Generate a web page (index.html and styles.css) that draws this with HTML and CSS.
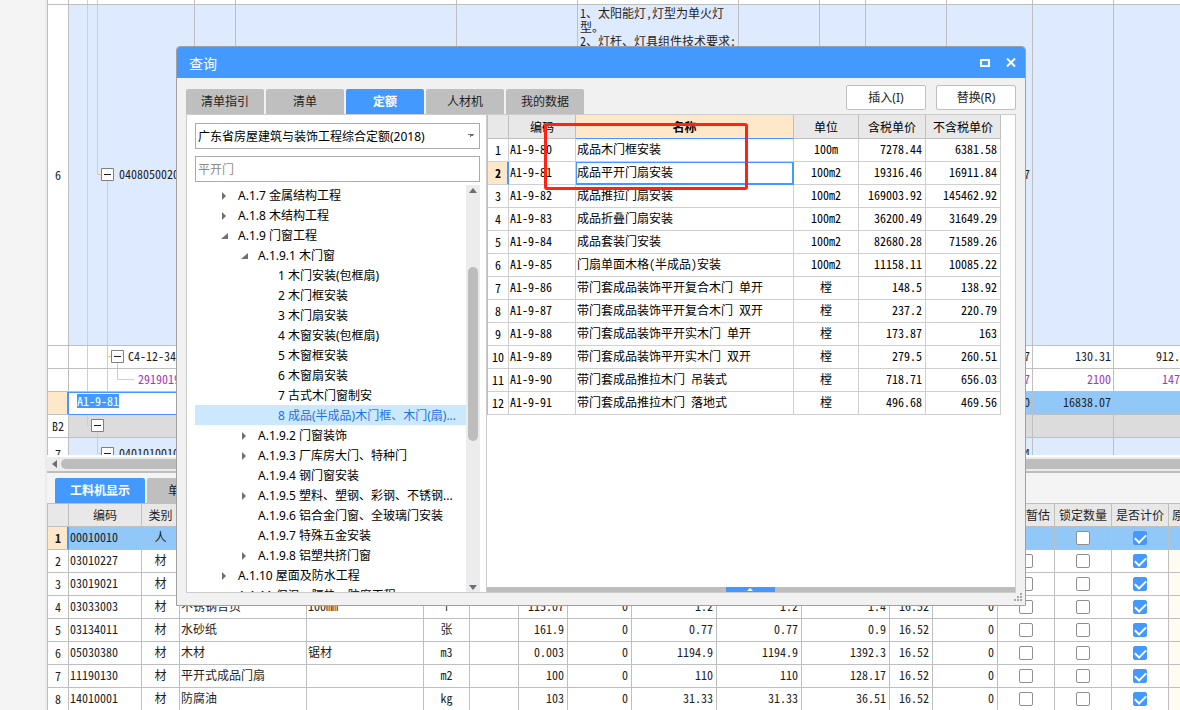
FILE: index.html
```html
<!DOCTYPE html>
<html lang="zh-CN">
<head>
<meta charset="utf-8">
<title>查询</title>
<link rel="stylesheet" href="styles.css">
</head>
<body>
<div class="app">
  <aside class="rail"></aside>
  <main class="work">
    <section class="bill">
      <table class="grid bill-grid">
        <colgroup><col class="w21"><col class="w126"><col class="w41"><col class="w221"><col class="w121"><col class="w161"><col class="w81"><col class="w46"><col class="w81"><col class="w86"><col class="w81"><col class="w81"></colgroup>
        <tbody>
          <tr class="peek"><td></td><td class="tree-cell"><svg width="30" height="4"><path class="branch" d="M18.5 0V4M28.5 0V4"/></svg></td><td></td><td></td><td></td><td></td><td></td><td></td><td></td><td></td><td></td><td></td></tr>
          <tr class="item"><td class="no">6</td><td class="tree-cell"><div class="node"><svg width="46" height="340"><path class="branch" d="M18.5 0V340M28.5 0V169.5H33M38.5 176V340"/><path class="box" d="M32.5 163.5h12v12h-12z"/><path class="minus" d="M35 169.5h7"/></svg><span class="gap">040805002001</span></div></td><td></td><td></td><td></td><td class="note">1、太阳能灯,灯型为单火灯型。<br>2、灯杆、灯具组件技术要求:</td><td></td><td></td><td></td><td class="num">7</td><td></td><td></td></tr>
          <tr><td class="no"></td><td class="tree-cell"><div class="node"><svg width="55" height="22"><path class="branch" d="M18.5 0V22M38.5 0V22M38.5 10.5H43M48.5 17V22"/><path class="box" d="M42.5 4.5h12v12h-12z"/><path class="minus" d="M45 10.5h7"/></svg><span class="gap">C4-12-34</span></div></td><td></td><td></td><td></td><td></td><td></td><td></td><td></td><td class="num">7</td><td class="num">130.31</td><td class="num">912.17</td></tr>
          <tr class="purple"><td class="no"></td><td class="tree-cell"><div class="node"><svg width="65" height="22"><path class="branch" d="M18.5 0V22M38.5 0V22M48.5 0V10.5H65"/></svg><span class="gap">29190190</span></div></td><td></td><td></td><td></td><td></td><td></td><td></td><td></td><td class="num">7</td><td class="num">2100</td><td class="num">14700</td></tr>
          <tr class="picked"><td class="no here"></td><td class="editing"><mark>A1-9-81</mark></td><td></td><td></td><td></td><td></td><td></td><td></td><td></td><td class="num">0</td><td class="num">16838.07</td><td></td></tr>
          <tr class="part"><td class="no">B2</td><td class="tree-cell"><div class="node"><svg width="46" height="22"><path class="branch" d="M18.5 0V10.5H23M28.5 17V22"/><path class="box" d="M22.5 4.5h12v12h-12z"/><path class="minus" d="M25 10.5h7"/></svg></div></td><td></td><td></td><td></td><td></td><td></td><td></td><td></td><td></td><td></td><td></td></tr>
          <tr class="item last"><td class="no">7</td><td class="tree-cell"><div class="node"><svg width="46" height="32"><path class="branch" d="M28.5 0V15.5H33M38.5 22V32"/><path class="box" d="M32.5 9.5h12v12h-12z"/><path class="minus" d="M35 15.5h7"/></svg><span class="gap">040101001001</span></div></td><td></td><td></td><td></td><td></td><td></td><td></td><td></td><td class="num">4</td><td></td><td></td></tr>
        </tbody>
      </table>
    </section>
    <div class="hscroll"><svg width="14" height="14"><path d="M10 3v8L5 7z" fill="#6d6d76"/></svg><span class="hthumb"></span></div>
    <section class="detail">
      <nav class="subtabs"><button class="subtab on">工料机显示</button><button class="subtab">单价构成</button></nav>
      <table class="grid detail-grid">
        <colgroup><col class="w21"><col class="w73"><col class="w38"><col class="w127"><col class="w117"><col class="w46"><col class="w49"><col class="w49"><col class="w64"><col class="w85"><col class="w85"><col class="w88"><col class="w43"><col class="w65"><col class="w57"><col class="w57"><col class="w57"><col class="w81"></colgroup>
        <thead><tr><th></th><th>编码</th><th>类别</th><th></th><th></th><th></th><th></th><th></th><th></th><th></th><th></th><th></th><th></th><th></th><th>是否暂估</th><th>锁定数量</th><th>是否计价</th><th class="left">原</th></tr></thead>
        <tbody>
          <tr class="picked"><td class="no here">1</td><td>00010010</td><td class="mid">人</td><td></td><td></td><td></td><td></td><td></td><td></td><td></td><td></td><td></td><td></td><td></td><td></td><td class="mid"><input type="checkbox" aria-label="锁定数量"></td><td class="mid"><input type="checkbox" aria-label="是否计价" checked></td><td></td></tr>
          <tr><td class="no">2</td><td>03010227</td><td class="mid">材</td><td></td><td></td><td></td><td></td><td></td><td></td><td></td><td></td><td></td><td></td><td></td><td class="mid"><input type="checkbox" aria-label="是否暂估"></td><td class="mid"><input type="checkbox" aria-label="锁定数量"></td><td class="mid"><input type="checkbox" aria-label="是否计价" checked></td><td class="cream"></td></tr>
          <tr><td class="no">3</td><td>03019021</td><td class="mid">材</td><td></td><td></td><td></td><td></td><td></td><td></td><td></td><td></td><td></td><td></td><td></td><td class="mid"><input type="checkbox" aria-label="是否暂估"></td><td class="mid"><input type="checkbox" aria-label="锁定数量"></td><td class="mid"><input type="checkbox" aria-label="是否计价" checked></td><td class="cream"></td></tr>
          <tr><td class="no">4</td><td>03033003</td><td class="mid">材</td><td>不锈钢合页</td><td>100mm</td><td class="mid">个</td><td></td><td class="num">115.07</td><td class="num">0</td><td class="num">1.2</td><td class="num">1.2</td><td class="num">1.4</td><td class="num">16.52</td><td class="num">0</td><td class="mid"><input type="checkbox" aria-label="是否暂估"></td><td class="mid"><input type="checkbox" aria-label="锁定数量"></td><td class="mid"><input type="checkbox" aria-label="是否计价" checked></td><td class="cream"></td></tr>
          <tr><td class="no">5</td><td>03134011</td><td class="mid">材</td><td>水砂纸</td><td></td><td class="mid">张</td><td></td><td class="num">161.9</td><td class="num">0</td><td class="num">0.77</td><td class="num">0.77</td><td class="num">0.9</td><td class="num">16.52</td><td class="num">0</td><td class="mid"><input type="checkbox" aria-label="是否暂估"></td><td class="mid"><input type="checkbox" aria-label="锁定数量"></td><td class="mid"><input type="checkbox" aria-label="是否计价" checked></td><td class="cream"></td></tr>
          <tr><td class="no">6</td><td>05030380</td><td class="mid">材</td><td>木材</td><td>锯材</td><td class="mid">m3</td><td></td><td class="num">0.003</td><td class="num">0</td><td class="num">1194.9</td><td class="num">1194.9</td><td class="num">1392.3</td><td class="num">16.52</td><td class="num">0</td><td class="mid"><input type="checkbox" aria-label="是否暂估"></td><td class="mid"><input type="checkbox" aria-label="锁定数量"></td><td class="mid"><input type="checkbox" aria-label="是否计价" checked></td><td class="cream"></td></tr>
          <tr><td class="no">7</td><td>11190130</td><td class="mid">材</td><td>平开式成品门扇</td><td></td><td class="mid">m2</td><td></td><td class="num">100</td><td class="num">0</td><td class="num">110</td><td class="num">110</td><td class="num">128.17</td><td class="num">16.52</td><td class="num">0</td><td class="mid"><input type="checkbox" aria-label="是否暂估"></td><td class="mid"><input type="checkbox" aria-label="锁定数量"></td><td class="mid"><input type="checkbox" aria-label="是否计价" checked></td><td class="cream"></td></tr>
          <tr><td class="no">8</td><td>14010001</td><td class="mid">材</td><td>防腐油</td><td></td><td class="mid">kg</td><td></td><td class="num">103</td><td class="num">0</td><td class="num">31.33</td><td class="num">31.33</td><td class="num">36.51</td><td class="num">16.52</td><td class="num">0</td><td class="mid"><input type="checkbox" aria-label="是否暂估"></td><td class="mid"><input type="checkbox" aria-label="锁定数量"></td><td class="mid"><input type="checkbox" aria-label="是否计价" checked></td><td class="cream"></td></tr>
        </tbody>
      </table>
    </section>
  </main>

  <div class="dialog" role="dialog" aria-label="查询">
    <header class="titlebar">
      <h1>查询</h1>
      <button class="winbtn" aria-label="最大化"><svg width="10" height="8"><path d="M1 1h8v6H1z" fill="none" stroke="#fff" stroke-width="2"/></svg></button>
      <button class="winbtn" aria-label="关闭"><svg width="10" height="9"><path d="M1 .5l8 8M9 .5l-8 8" stroke="#fff" stroke-width="2"/></svg></button>
    </header>
    <div class="toolbar">
      <nav class="tabs"><button class="tab">清单指引</button><button class="tab">清单</button><button class="tab on">定额</button><button class="tab">人材机</button><button class="tab">我的数据</button></nav>
      <div class="actions"><button class="action">插入(I)</button><button class="action">替换(R)</button></div>
    </div>
    <div class="panel">
      <section class="finder">
        <select class="field" aria-label="定额库"><option>广东省房屋建筑与装饰工程综合定额(2018)</option></select>
        <input class="field query" type="text" placeholder="平开门" aria-label="搜索">
        <div class="treebox">
          <ul class="tree">
            <li class="d1 closed">A.1.7 金属结构工程</li>
            <li class="d1 closed">A.1.8 木结构工程</li>
            <li class="d1 open">A.1.9 门窗工程</li>
            <li class="d2 open">A.1.9.1 木门窗</li>
            <li class="d3">1 木门安装(包框扇)</li>
            <li class="d3">2 木门框安装</li>
            <li class="d3">3 木门扇安装</li>
            <li class="d3">4 木窗安装(包框扇)</li>
            <li class="d3">5 木窗框安装</li>
            <li class="d3">6 木窗扇安装</li>
            <li class="d3">7 古式木门窗制安</li>
            <li class="d3 current">8 成品(半成品)木门框、木门(扇)...</li>
            <li class="d2 closed">A.1.9.2 门窗装饰</li>
            <li class="d2 closed">A.1.9.3 厂库房大门、特种门</li>
            <li class="d2">A.1.9.4 钢门窗安装</li>
            <li class="d2 closed">A.1.9.5 塑料、塑钢、彩钢、不锈钢...</li>
            <li class="d2">A.1.9.6 铝合金门窗、全玻璃门安装</li>
            <li class="d2">A.1.9.7 特殊五金安装</li>
            <li class="d2 closed">A.1.9.8 铝塑共挤门窗</li>
            <li class="d1 closed">A.1.10 屋面及防水工程</li>
            <li class="d1">A.1.11 保温、隔热、防腐工程</li>
          </ul>
          <div class="vscroll">
            <svg width="14" height="10"><path d="M3 8h8L7 3z" fill="#6d6d76"/></svg>
            <span class="track"><span class="vthumb"></span></span>
            <svg width="14" height="10"><path d="M3 3h8L7 8z" fill="#6d6d76"/></svg>
          </div>
        </div>
      </section>
      <section class="results">
        <div class="table-area">
        <table class="grid quota">
          <colgroup><col class="w21"><col class="w67"><col class="w218"><col class="w65"><col class="w67"><col class="w75"></colgroup>
          <thead><tr><th></th><th>编码</th><th class="active">名称</th><th>单位</th><th>含税单价</th><th>不含税单价</th></tr></thead>
          <tbody>
            <tr><td class="no">1</td><td>A1-9-80</td><td>成品木门框安装</td><td class="mid">100m</td><td class="num">7278.44</td><td class="num">6381.58</td></tr>
            <tr><td class="no here">2</td><td>A1-9-81</td><td class="focus">成品平开门扇安装</td><td class="mid">100m2</td><td class="num">19316.46</td><td class="num">16911.84</td></tr>
            <tr><td class="no">3</td><td>A1-9-82</td><td>成品推拉门扇安装</td><td class="mid">100m2</td><td class="num">169003.92</td><td class="num">145462.92</td></tr>
            <tr><td class="no">4</td><td>A1-9-83</td><td>成品折叠门扇安装</td><td class="mid">100m2</td><td class="num">36200.49</td><td class="num">31649.29</td></tr>
            <tr><td class="no">5</td><td>A1-9-84</td><td>成品套装门安装</td><td class="mid">100m2</td><td class="num">82680.28</td><td class="num">71589.26</td></tr>
            <tr><td class="no">6</td><td>A1-9-85</td><td>门扇单面木格(半成品)安装</td><td class="mid">100m2</td><td class="num">11158.11</td><td class="num">10085.22</td></tr>
            <tr><td class="no">7</td><td>A1-9-86</td><td>带门套成品装饰平开复合木门 单开</td><td class="mid">樘</td><td class="num">148.5</td><td class="num">138.92</td></tr>
            <tr><td class="no">8</td><td>A1-9-87</td><td>带门套成品装饰平开复合木门 双开</td><td class="mid">樘</td><td class="num">237.2</td><td class="num">220.79</td></tr>
            <tr><td class="no">9</td><td>A1-9-88</td><td>带门套成品装饰平开实木门 单开</td><td class="mid">樘</td><td class="num">173.87</td><td class="num">163</td></tr>
            <tr><td class="no">10</td><td>A1-9-89</td><td>带门套成品装饰平开实木门 双开</td><td class="mid">樘</td><td class="num">279.5</td><td class="num">260.51</td></tr>
            <tr><td class="no">11</td><td>A1-9-90</td><td>带门套成品推拉木门 吊装式</td><td class="mid">樘</td><td class="num">718.71</td><td class="num">656.03</td></tr>
            <tr><td class="no">12</td><td>A1-9-91</td><td>带门套成品推拉木门 落地式</td><td class="mid">樘</td><td class="num">496.68</td><td class="num">469.56</td></tr>
          </tbody>
        </table>
        <div class="callout"></div>
        </div>
        <div class="splitter"><button class="handle" aria-label="展开"><svg width="6" height="3"><path d="M0 3h6L3 0z" fill="#fff"/></svg></button></div>
      </section>
    </div>
    <footer class="grip"><svg width="8" height="8"><path d="M6 0h2v2H6zM3 3h2v2H3zM6 3h2v2H6zM0 6h2v2H0zM3 6h2v2H3zM6 6h2v2H6z" fill="#a8a8a8"/></svg></footer>
  </div>
</div>
</body>
</html>
```

FILE: styles.css
```css
* { box-sizing: border-box; }
body {
  margin: 0;
  background: #f4f4f4;
  color: #1e1e1e;
  font: 12px/16px "Noto Sans", "Noto Sans CJK SC", sans-serif;
}
button, input, select { font: inherit; color: inherit; margin: 0; }
button { border: 0; padding: 0; }
svg { display: block; flex: none; }

.app { position: relative; display: flex; height: 100vh; overflow: hidden; }
.rail { flex: none; width: 47px; border-right: 2px solid #ececec; }
.work { flex: 1; min-width: 0; display: flex; flex-direction: column; overflow: hidden; }

/* shared grid look */
.grid {
  table-layout: fixed;
  width: 0;
  border-collapse: separate;
  border-spacing: 0;
  border-left: 1px solid #bfbfbf;
  font-family: "Noto Sans CJK SC", sans-serif;
  font-feature-settings: "hwid";
}
.grid th, .grid td {
  height: 23px;
  padding: 0 3px 2px 1px;
  border: solid #bfbfbf;
  border-width: 0 1px 1px 0;
  background: #fff;
  line-height: 16px;
  white-space: nowrap;
  overflow: hidden;
  text-align: left;
}
.grid th { background: #e8e8e8; font-weight: 400; text-align: center; padding: 0; }
.grid th.left { text-align: left; padding-left: 3px; }
.grid .no { padding: 0; text-align: center; }
.grid .mid { padding: 0 0 2px; text-align: center; }
.grid .mid:has(input) { padding: 0; }
.grid .num { text-align: right; }
.bill-grid .num { padding-right: 2px; }
.grid .here { background: #ffe7c9; font-weight: 700; box-shadow: inset -1px 0 #4499ff; border-right-color: #4499ff; }
.w21 { width: 21px; } .w38 { width: 38px; } .w41 { width: 41px; } .w43 { width: 43px; }
.w46 { width: 46px; } .w49 { width: 49px; } .w57 { width: 57px; } .w64 { width: 64px; }
.w65 { width: 65px; } .w67 { width: 67px; } .w73 { width: 73px; } .w75 { width: 75px; }
.w81 { width: 81px; } .w85 { width: 85px; } .w86 { width: 86px; } .w88 { width: 88px; }
.w117 { width: 117px; } .w121 { width: 121px; } .w126 { width: 126px; } .w127 { width: 127px; }
.w161 { width: 161px; } .w218 { width: 218px; } .w221 { width: 221px; }

/* bill of quantities */
.bill { flex: 1; min-height: 0; overflow: hidden; background: #fff; border-bottom: 2px solid #fff; }
.grid .tree-cell { padding: 0; }
.grid .peek td { height: 5px; padding: 0; line-height: 4px; }
.item td { background: #deeaff; }
.item .no { background: #fff; }
.grid .note { vertical-align: top; white-space: normal; line-height: 14px; padding: 1px 2px 0; }
.last td { height: 33px; }
.node { display: flex; align-items: center; }
.gap { padding: 0 0 2px 4px; }
.branch { fill: none; stroke: #ffc67a; }
.box { fill: #fff; stroke: #808080; }
.minus { stroke: #1e1e1e; }
.purple .node, .purple .num { color: #a33cb4; }
.picked td { background: #92c8f7; }
.picked .editing { background: #fff; padding-left: 8px; padding-top: 2px; vertical-align: top; box-shadow: inset 0 1px #4499ff; border-color: #4499ff; }
.editing mark { display: block; width: 42px; background: #4499ff; color: #fff; line-height: 14px; }
.part td { background: #dcdcdc; }
.part .no { background: #fff; }

.hscroll { flex: none; display: flex; align-items: center; height: 14px; background: #ececec; }
.hthumb { flex: 1; height: 10px; border-radius: 5px 0 0 5px; background: #bdbdbd; }
.detail { flex: none; margin-bottom: -1px; border-top: 2px solid #bdbdbd; }
.subtabs { display: flex; gap: 2px; padding: 5px 0 0 8px; border-bottom: 1px solid #bfbfbf; }
.subtab { width: 90px; height: 25px; background: #bfbfbf; border-radius: 2px 2px 0 0; }
.subtab.on { background: #4499ff; color: #fff; font-weight: 700; }
.grid .cream { background: #fffaf2; }

input[type="checkbox"] {
  appearance: none;
  display: block;
  width: 14px;
  height: 14px;
  margin: 0 auto;
  border: 1px solid #8f8f8f;
  border-radius: 2px;
  background: #fff;
}
input[type="checkbox"]:checked { border-color: #4499ff; background: #4499ff; }
input[type="checkbox"]:checked::after {
  content: "";
  display: block;
  width: 9px;
  height: 5px;
  margin: 2px 0 0 1px;
  border: solid #fff;
  border-width: 0 0 2px 2px;
  transform: rotate(-45deg);
}

/* query dialog */
.dialog {
  position: absolute;
  top: 46px;
  left: 176px;
  right: 154px;
  bottom: 104px;
  display: flex;
  flex-direction: column;
  border: 1px solid #a0a0a0;
  border-radius: 4px 4px 0 0;
  background: #f1f1f1;
  overflow: hidden;
}
.titlebar { flex: none; display: flex; align-items: center; gap: 16px; height: 31px; padding: 0 9px 0 12px; background: #4499ff; color: #fff; }
.titlebar h1 { flex: 1; margin: 0; padding-top: 2px; font-size: 14px; font-weight: 400; line-height: 20px; }
.winbtn { background: none; }
.toolbar { flex: none; display: flex; justify-content: space-between; align-items: flex-end; padding: 7px 9px 0; height: 36px; }
.tabs { display: flex; gap: 2px; }
.tab { width: 78px; height: 25px; background: #bfbfbf; border-radius: 2px 2px 0 0; }
.tab.on { background: #4499ff; color: #fff; font-weight: 700; }
.actions { display: flex; gap: 10px; align-self: flex-start; }
.action { width: 80px; height: 25px; border: 1px solid #bfbfbf; border-radius: 2px; background: #fff; }
.panel { flex: 1; min-height: 0; display: flex; margin: 0 9px; border: 1px solid #ccc; background: #fff; color: #000; }
.finder { flex: none; width: 299px; padding: 8px 5px 0 8px; display: flex; flex-direction: column; }
.field { flex: none; width: 285px; height: 26px; padding: 1px 2px 0; border: 1px solid #ababab; border-radius: 0; background: #fff; }
select.field {
  appearance: none;
  background-image: linear-gradient(to bottom left, #707070 50%, transparent 50%), linear-gradient(to bottom right, #707070 50%, transparent 50%);
  background-repeat: no-repeat;
  background-position: 272px 10px, 275px 10px;
  background-size: 3px 3px;
}
.query { margin-top: 7px; }
.query::placeholder { color: #8c8c8c; opacity: 1; }
.treebox { flex: 1; min-height: 0; display: flex; width: 285px; margin-top: 3px; }
.tree { flex: 1; min-width: 0; margin: 0; padding: 0; list-style: none; overflow: hidden; }
.tree li { display: flex; align-items: center; height: 20px; padding-top: 2px; white-space: pre; }
.tree li::before { content: ""; flex: none; width: 7px; height: 8px; margin-right: 10px; }
.tree .closed::before { background: #707070; clip-path: polygon(1px 0, 5px 4px, 1px 8px); }
.tree .open::before { background: #707070; clip-path: polygon(7px 1px, 7px 7px, 0 7px); }
.tree .d1 { padding-left: 26px; }
.tree .d2 { padding-left: 46px; }
.tree .d3 { padding-left: 66px; }
.tree .current { background: #cce8ff; color: #1b74e0; }
.vscroll { flex: none; width: 14px; display: flex; flex-direction: column; background: #ececec; }
.track { flex: 1; padding: 72px 2px 0; }
.vthumb { display: block; height: 174px; border-radius: 5px; background: #bdbdbd; }
.results { flex: 1; min-width: 0; display: flex; flex-direction: column; border-left: 1px solid #ccc; }
.table-area { position: relative; flex: 1; min-height: 0; overflow: hidden; }
.quota td { border-color: #cfcfcf; }
.quota th { padding-top: 1px; height: 24px; }
.grid th.active { background: #ffe7c9; font-weight: 700; border-bottom-color: #4499ff; }
.grid .focus { box-shadow: inset 0 0 0 1px #4499ff; outline: 1px solid #4499ff; outline-offset: -1px; border-color: #4499ff; }
.callout { position: absolute; left: 57px; top: 8px; width: 204px; height: 67px; border: 3px solid #ff2314; border-radius: 3px; }
.splitter { flex: none; display: flex; justify-content: center; height: 5px; padding-right: 2px; background: #bdbdbd; }
.handle { width: 49px; height: 5px; display: flex; align-items: center; justify-content: center; background: #4499ff; }
.grip { flex: none; display: flex; justify-content: flex-end; align-items: flex-start; height: 12px; padding: 0 3px 0 0; }
```
